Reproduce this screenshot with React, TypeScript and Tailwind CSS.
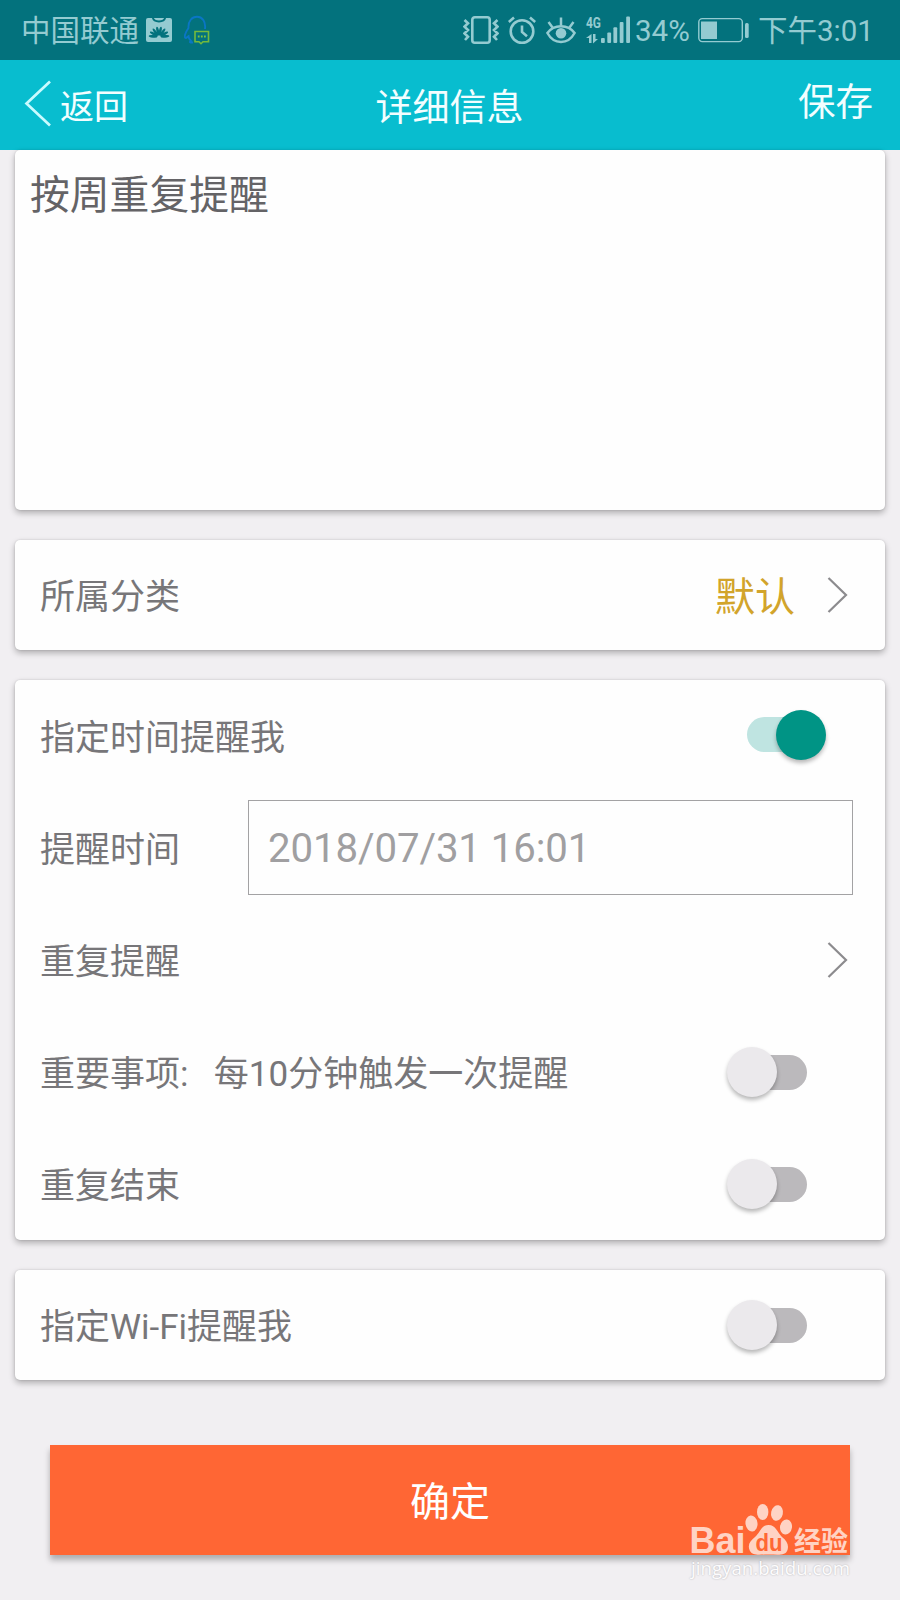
import React from 'react'
import clsx from 'clsx'

const StatusBar = () => (
  <div className="h-[60px] bg-[#03727d] text-[#94cbd1] flex items-center pl-[21px] pr-7 text-[29.500px] leading-none">
    <span className="w-[118px] whitespace-nowrap mt-[4px]">中国联通</span>
    {/* Huawei app */}
    <svg className="ml-[7px]" width="26" height="26" viewBox="0 0 26 26">
      <rect y="1" width="26" height="24" rx="2" fill="#94cbd1" />
      <path d="M6.500 0c1.500 6 11.500 6 13 0" stroke="#03727d" strokeWidth="1.800" fill="none" />
      <g fill="#03727d">
        {[-84, -60, -36, -12, 12, 36, 60, 84].map((a) => (
          <ellipse key={a} cx="13" cy="14" rx="1.300" ry="4.400" transform={`rotate(${a} 13 20)`} />
        ))}
      </g>
    </svg>
    {/* QQ message */}
    <svg className="ml-3" width="26" height="30" viewBox="0 0 26 30" fill="none">
      <path d="M21 14C22 6 18 1.800 13 1.800S4 6 4.500 13C1 18 0 22 1.500 23c1 .5 2-1.500 3-2 0 2 1.500 4 2.500 5-2 1-1 2 2 1.500" stroke="#0a76c4" strokeWidth="1.900" />
      <path d="M11 16.500h13.500v10.200H19l-2 2-2-2h-4Z" stroke="#74b93c" strokeWidth="1.600" />
      <path d="M13.800 21.500h1.800m1.300 0h1.800m1.300 0h1.800" stroke="#7cc23c" strokeWidth="1.800" />
    </svg>

    <div className="ml-auto flex items-center">
      <svg width="36" height="30" viewBox="0 0 36 30" fill="none" stroke="currentColor" strokeWidth="2.600">
        <rect x="9.300" y="2.300" width="17.400" height="25.400" rx="2.500" />
        <path d="M1.500 5l3.500 3.300-3.500 3.400L5 15l-3.500 3.300L5 21.700 2 25M34.500 5 31 8.300l3.500 3.400L31 15l3.500 3.300-3.500 3.400 3 3.300" />
      </svg>
      <svg className="ml-[9px]" width="28" height="30" viewBox="0 0 28 30" fill="none" stroke="currentColor" strokeWidth="2.600">
        <circle cx="14" cy="16.500" r="11.300" />
        <path d="M.8 7 6 2.500M27.200 7 22 2.500M14 10.500v6.500l5 4.300" />
      </svg>
      <svg className="ml-[10px]" width="30" height="30" viewBox="0 0 30 30" fill="none" stroke="currentColor" strokeWidth="2.500">
        <path d="M1.400 18C8 9 22 9 28.600 18 22 30 8 30 1.400 18Z" />
        <path d="M15 2.500v8M2.500 7l4 5.500M27.500 7l-4 5.500" />
        <circle cx="15" cy="18.300" r="5.300" fill="currentColor" stroke="none" />
      </svg>
      <svg className="ml-[10px] overflow-visible" width="46" height="30" viewBox="0 0 46 30" fill="currentColor">
        <text x="0" y="13" fontSize="15.500" fontWeight="700" textLength="15" lengthAdjust="spacingAndGlyphs">4G</text>
        <path d="M5.500 19v9H3v-5H0ZM7 19v9.500l5-4.500H9.500v-5Z" />
        <rect x="15" y="23" width="3.800" height="5" rx="1" />
        <rect x="21.300" y="17.500" width="3.800" height="10.500" rx="1" />
        <rect x="27.400" y="12.300" width="3.800" height="15.700" rx="1" />
        <rect x="33.700" y="7" width="3.800" height="21" rx="1" />
        <rect x="40.200" y="1.500" width="3.800" height="26.500" rx="1" />
      </svg>
      <span className="ml-[3px] mt-[4px] w-[56px] whitespace-nowrap">34%</span>
      <svg className="ml-[7px]" width="52" height="26" viewBox="0 0 52 26" fill="none" stroke="currentColor">
        <rect x=".8" y="1.600" width="43.500" height="23" rx="3.500" strokeWidth="1.400" />
        <path d="M3 4.500h16v17.500H3Z" fill="currentColor" stroke="none" />
        <rect x="47" y="6" width="3.700" height="15" rx="1.500" fill="currentColor" stroke="none" />
      </svg>
      <span className="ml-[8px] mt-[4px] w-[114px] whitespace-nowrap">下午3:01</span>
    </div>
  </div>
)

const Header = () => (
  <header className="h-[90px] bg-[#08bdcf] text-[#f2feff] grid grid-cols-3 items-center pl-6 pr-[27px] leading-none">
    <button className="flex items-center text-[34px]">
      <svg className="-mt-[5px]" width="28" height="48" viewBox="0 0 28 48" fill="none" stroke="#c9fbff" strokeWidth="2.700">
        <path d="M26 2.500 2.500 24.500 26 46.500" />
      </svg>
      <span className="ml-2 mt-[3px]">返回</span>
    </button>
    <h1 className="text-center text-[37px] mt-[6px] pl-[2px]">详细信息</h1>
    <button className="text-right text-[37.500px] -mt-[4px]">保存</button>
  </header>
)

interface CardProps {
  children?: React.ReactNode
  className?: string
}

const Card: React.FC<CardProps> = ({ children, className }) => (
  <section className={clsx('bg-[#fefefe] rounded-[5px] shadow-[0_3px_6px_rgba(0,0,0,0.28),0_0_2px_rgba(0,0,0,0.15)]', className)}>
    {children}
  </section>
)

const Row: React.FC<CardProps & { label: string }> = ({ label, children, className }) => (
  <div className={clsx('flex items-center justify-between pl-[25px]', className)}>
    <span className="text-[35px] leading-none whitespace-pre [word-spacing:4px] mt-[5px]">{label}</span>
    {children}
  </div>
)

const Chevron = () => (
  <svg className="mr-[37px]" width="22" height="38" viewBox="0 0 22 38" fill="none" stroke="#8c8b8e" strokeWidth="2.200">
    <path d="M2.500 2 20 19 2.500 36" />
  </svg>
)

const Toggle = ({ on = false }: { on?: boolean }) => (
  <div
    className={clsx(
      'w-20 h-[50px] flex items-center relative',
      on ? 'justify-end mr-[59px] -mt-[3px]' : 'mr-[78px]'
    )}
  >
    <div className={clsx('absolute h-[35px] w-[70px] rounded-full', on ? 'left-px bg-[#bfe4e1]' : 'right-0 bg-[#bbb9bc]')} />
    <div
      className={clsx(
        'relative size-[50px] rounded-full shadow-[0_3px_4px_rgba(0,0,0,0.28)]',
        on ? 'bg-[#009485]' : 'bg-[#ebe9ec]'
      )}
    />
  </div>
)

const Watermark = () => (
  <svg className="absolute left-[686px] top-[1500px]" width="170" height="84" viewBox="0 0 170 84" fill="#ffd3c4">
    <text x="3.500" y="53" fontFamily="Liberation Sans" fontSize="36" fontWeight="700" textLength="56" lengthAdjust="spacingAndGlyphs">Bai</text>
    <ellipse cx="65.500" cy="23.500" rx="6" ry="8" transform="rotate(-8 65.500 23.500)" />
    <ellipse cx="76.700" cy="12" rx="5.700" ry="8" />
    <ellipse cx="91" cy="13" rx="5.900" ry="7.800" transform="rotate(12 91 13)" />
    <ellipse cx="100" cy="27" rx="6" ry="7.500" transform="rotate(8 100 27)" />
    <path d="M82.500 25C90 25 91 32 96 37c5 4 7 8 5.500 13-2 6-9 4.500-19 4.500S67 56 64 51c-3-6 0-10 5-14s6-12 13.500-12Z" />
    <text x="69.500" y="50.500" fill="#ff6834" fontFamily="Liberation Sans" fontSize="24" fontWeight="700" textLength="27" lengthAdjust="spacingAndGlyphs">du</text>
    <text x="108" y="50.500" fontSize="27" fontWeight="700" textLength="54" lengthAdjust="spacingAndGlyphs">经验</text>
    <text className="[text-shadow:0_0_2px_rgba(0,0,0,0.28)]" x="5" y="74.500" fill="#fdfcfd" fontFamily="Open Sans" fontSize="19" textLength="159" lengthAdjust="spacingAndGlyphs">jingyan.baidu.com</text>
  </svg>
)

export default function App() {
  return (
    <div className="relative w-[900px] h-[1600px] overflow-hidden bg-[#f1eff2] text-[#777679] font-normal font-['Roboto','Noto_Sans_CJK_SC',sans-serif]">
      <StatusBar />
      <Header />
      <main className="px-[15px] flex flex-col gap-[30px]">
        <Card className="h-[360px] px-[15px] pt-[26px]">
          <p className="text-[39.800px] leading-none text-[#646366]">按周重复提醒</p>
        </Card>

        <Card>
          <Row label="所属分类" className="h-[110px]">
            <div className="flex items-center">
              <span className="text-[40px] leading-none text-[#d2a42b] mr-[31px] mt-[6px]">默认</span>
              <Chevron />
            </div>
          </Row>
        </Card>

        <Card>
          <Row label="指定时间提醒我" className="h-[112px]">
            <Toggle on />
          </Row>
          <Row label="提醒时间" className="h-[112px]">
            <div className="w-[605px] h-[95px] mr-[32px] -mt-px border border-[#a3a2a4] flex items-center pl-[19px] pt-[4px] text-[40.200px] tracking-[-0.100px] leading-none text-[#a09fa1] whitespace-nowrap">
              2018/07/31 16:01
            </div>
          </Row>
          <Row label="重复提醒" className="h-[112px]">
            <Chevron />
          </Row>
          <Row label="重要事项:  每10分钟触发一次提醒" className="h-[112px]">
            <Toggle />
          </Row>
          <Row label="重复结束" className="h-[112px]">
            <Toggle />
          </Row>
        </Card>

        <Card>
          <Row label="指定Wi-Fi提醒我" className="h-[110px]">
            <Toggle />
          </Row>
        </Card>

        <button className="mt-[35px] mx-[35px] pt-[6px] h-[110px] bg-[#ff6634] text-white text-[40px] shadow-[0_5px_6px_rgba(0,0,0,0.28)]">
          确定
        </button>
      </main>
      <Watermark />
    </div>
  )
}
